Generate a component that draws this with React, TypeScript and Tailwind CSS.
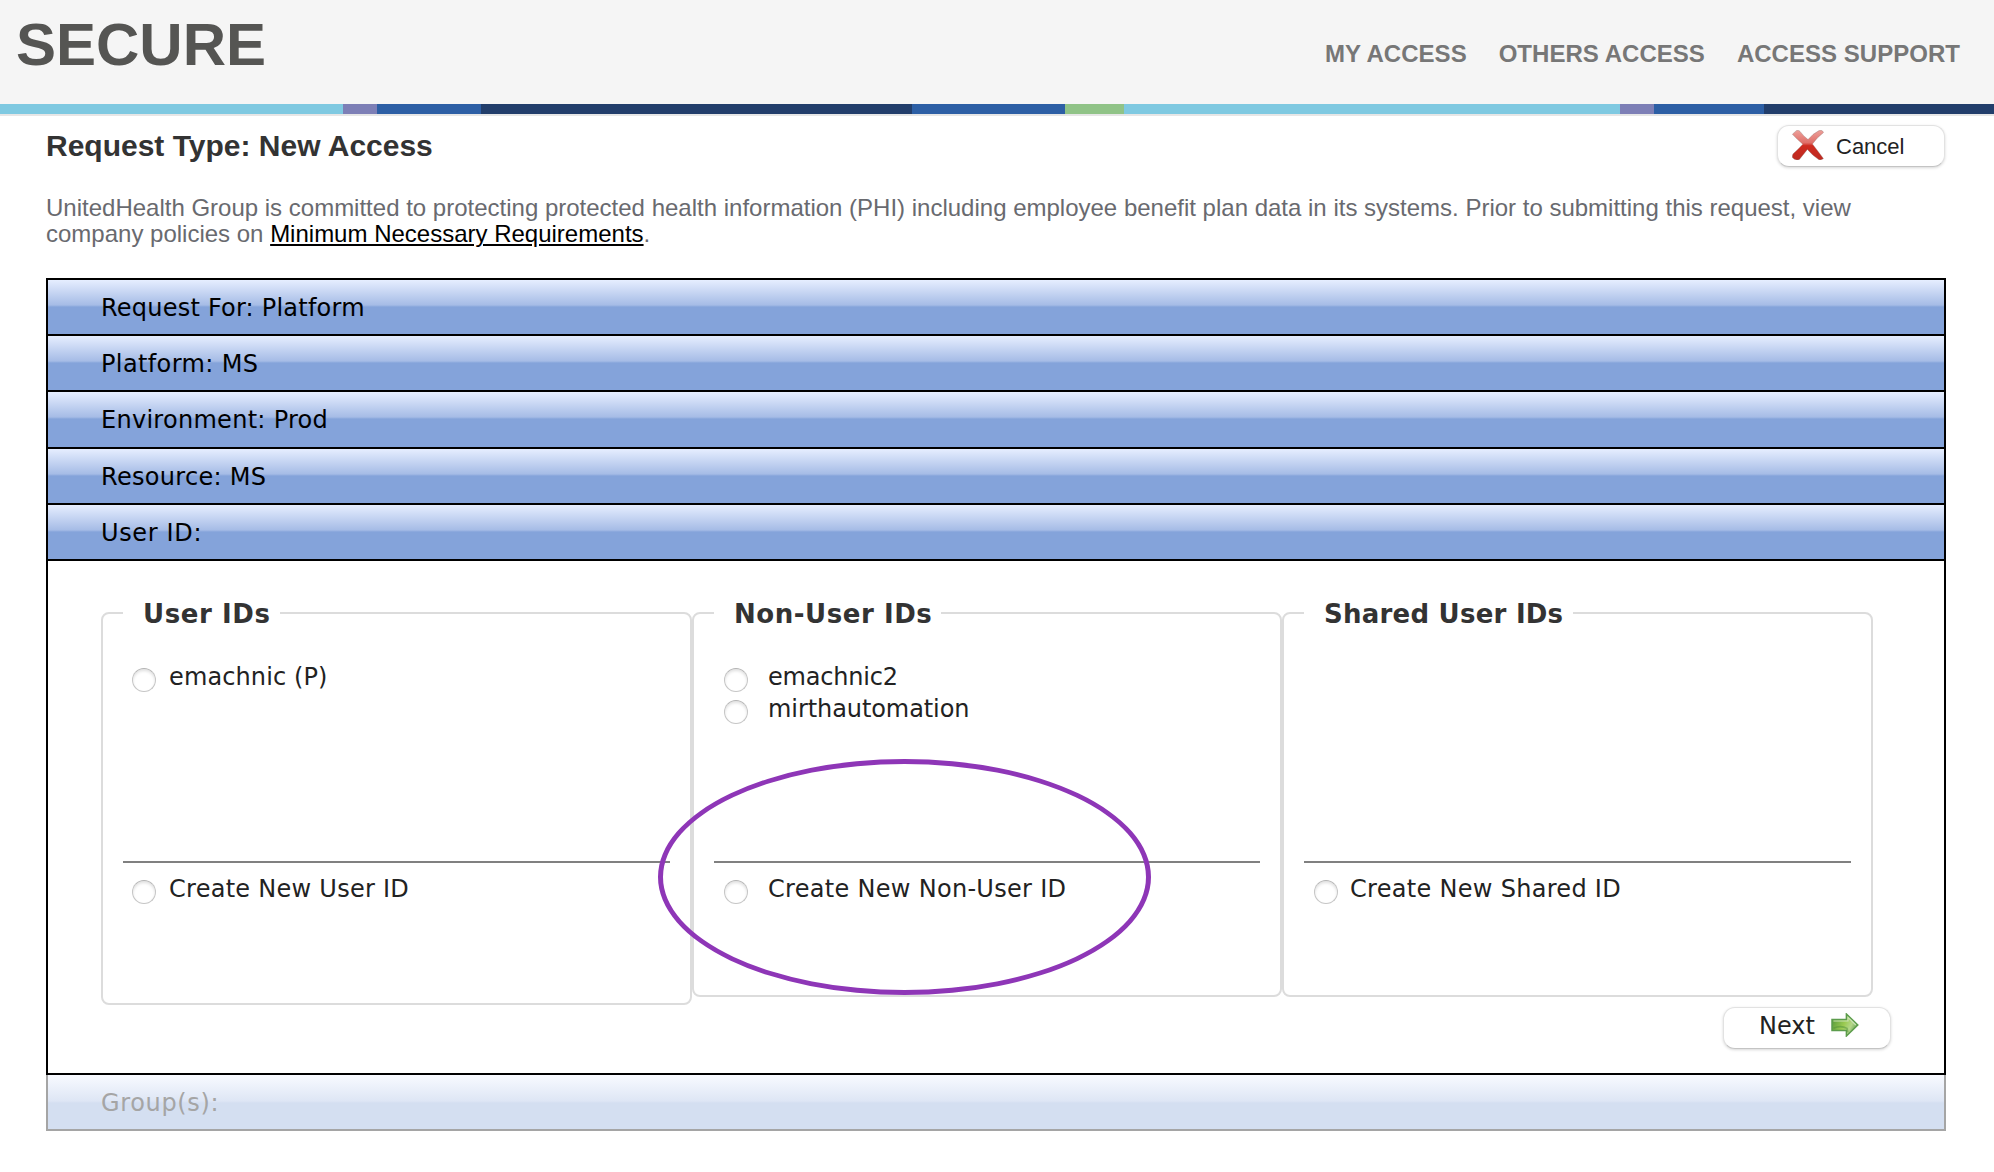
const stripes = [
  { width: 343, className: 'bg-[#7fc9e1]' },
  { width: 34, className: 'bg-[#7d7fb6]' },
  { width: 104, className: 'bg-[#2d5fa5]' },
  { width: 431, className: 'bg-[#223e6b]' },
  { width: 153, className: 'bg-[#2d5fa5]' },
  { width: 59, className: 'bg-[#90c387]' },
  { width: 496, className: 'bg-[#7fc9e1]' },
  { width: 34, className: 'bg-[#7d7fb6]' },
  { width: 110, className: 'bg-[#2d5fa5]' },
  { width: 230, className: 'bg-[#223e6b]' },
];

const sections = [
  { label: 'Request For:', value: 'Platform', className: 'h-[56px] tracking-[0.22px]' },
  { label: 'Platform:', value: 'MS', className: 'h-[56px] tracking-[0.38px]' },
  { label: 'Environment:', value: 'Prod', className: 'h-[57px] tracking-[0.28px]' },
  { label: 'Resource:', value: 'MS', className: 'h-[56px] tracking-[0.3px]' },
  { label: 'User ID:', value: '', className: 'h-[56px] tracking-[0.65px]' },
];

type Option = { label: string; tracking: string };
type Group = {
  title: string;
  legend: string;
  box: string;
  indent: string;
  gap: string;
  options: Option[];
  create: Option;
};

const groups: Group[] = [
  {
    title: 'User IDs',
    legend: 'pl-[20px] pr-[9px] tracking-[0.6px]',
    box: 'w-[591px] h-[408px]',
    indent: 'pl-[9px]',
    gap: 'gap-[13px]',
    options: [{ label: 'emachnic (P)', tracking: 'tracking-[0.12px]' }],
    create: { label: 'Create New User ID', tracking: 'tracking-[0.27px]' },
  },
  {
    title: 'Non-User IDs',
    legend: 'pl-[20px] pr-[9px] tracking-[0.55px]',
    box: 'w-[590px] h-[400px]',
    indent: 'pl-[10px]',
    gap: 'gap-[20px]',
    options: [
      { label: 'emachnic2', tracking: 'tracking-[-0.2px]' },
      { label: 'mirthautomation', tracking: 'tracking-[-0.08px]' },
    ],
    create: { label: 'Create New Non-User ID', tracking: 'tracking-[0.3px]' },
  },
  {
    title: 'Shared User IDs',
    legend: 'pl-[20px] pr-[10px] tracking-[0.24px]',
    box: 'w-[591px] h-[400px]',
    indent: 'pl-[10px]',
    gap: 'gap-[12px]',
    options: [],
    create: { label: 'Create New Shared ID', tracking: 'tracking-[0.3px]' },
  },
];

function RadioRow({ option, indent, gap }: { option: Option; indent: string; gap: string }) {
  return (
    <label className={`flex h-8 items-start ${indent} ${gap}`}>
      <span className="mt-1 size-6 shrink-0 rounded-full border border-[#c6c6c6] border-t-[#b4b4b4] bg-white shadow-[inset_0_2px_3px_rgba(0,0,0,0.12)]" />
      <span className={`text-[24px] leading-[26px] whitespace-nowrap text-[#222] ${option.tracking}`}>{option.label}</span>
    </label>
  );
}

function IdGroup({ group }: { group: Group }) {
  return (
    <fieldset className={`shrink-0 rounded-lg border-2 border-[#dcdcdc] px-5 ${group.box}`}>
      <legend className={`h-8 pt-px text-[26px] leading-8 font-bold whitespace-nowrap text-[#333] ${group.legend}`}>
        {group.title}
      </legend>
      <div className="h-[232px] pt-[35px]">
        {group.options.map((option) => (
          <RadioRow key={option.label} option={option} indent={group.indent} gap={group.gap} />
        ))}
      </div>
      <div className="mb-[13px] h-[2px] bg-[#808080]" />
      <RadioRow option={group.create} indent={group.indent} gap={group.gap} />
    </fieldset>
  );
}

function CrossIcon() {
  return (
    <svg className="h-[30px] w-8 shrink-0" viewBox="0 0 32 30">
      <defs>
        <linearGradient id="cross" x1="0" y1="0" x2="0" y2="1">
          <stop offset="0" stopColor="#eda09a" />
          <stop offset="0.42" stopColor="#e0706a" />
          <stop offset="0.52" stopColor="#cf2b20" />
          <stop offset="1" stopColor="#bd2a20" />
        </linearGradient>
      </defs>
      <path
        d="M0.4 4.2 L4.6 0.4 Q6.8 -0.2 8 1.4 Q11.4 6 16 9.6 Q20.5 3.8 27 0.6 Q30.6 -0.4 31.6 2.4 Q25 7.4 20.4 14 Q25.4 20.4 31.4 28.6 Q29.4 30.4 27 29.8 Q20.8 25.8 15.4 19.4 Q11.4 24.4 7.4 29.4 Q3 31 0.4 27.6 Q0 25 1.4 23.6 Q6.2 19.2 10.8 14.2 Q5.4 9.6 0.4 4.2 Z"
        fill="url(#cross)"
        stroke="#8d6f6c"
        strokeOpacity="0.4"
        strokeWidth="0.9"
      />
    </svg>
  );
}

function ArrowIcon() {
  return (
    <svg className="h-6 w-7 shrink-0" viewBox="0 0 28 24">
      <defs>
        <linearGradient id="arrow" x1="0" y1="0.2" x2="1" y2="0.6">
          <stop offset="0" stopColor="#55993a" />
          <stop offset="0.5" stopColor="#9ccb52" />
          <stop offset="0.75" stopColor="#b4d68a" />
          <stop offset="1" stopColor="#5fa04e" />
        </linearGradient>
      </defs>
      <path d="M1 6.4 H15.4 V1 L26.8 12 L15.4 23 V17.6 H1 Z" fill="url(#arrow)" stroke="#5c9c4c" strokeWidth="1.5" />
      <path d="M2.4 8 H17 V4.4 L24.8 12" fill="none" stroke="#c9e2b4" strokeWidth="1.2" />
      <path d="M2.4 15.2 Q10 12 16 15.4 L17 19.4" fill="none" stroke="#4f8f3a" strokeOpacity="0.5" strokeWidth="1.6" />
    </svg>
  );
}

const buttonClass =
  'flex shrink-0 rounded-[12px] border border-[#e2e2e2] border-b-[#c4c4c4] bg-white shadow-[0_1px_3px_rgba(0,0,0,0.16)]';

export default function App() {
  return (
    <div className="h-[1172px] w-[1994px] overflow-hidden bg-white font-['Liberation_Sans',Arial,sans-serif]">
      <header className="flex h-[104px] justify-between bg-[#f5f5f5] pr-[34px] pl-[16px]">
        <h1 className="mt-[15px] text-[60px] leading-[60px] font-bold text-[#555553]">SECURE</h1>
        <nav className="mt-[42px] flex gap-8 text-[24px] leading-6 font-bold tracking-[0.03px] text-[#777]">
          <a>MY ACCESS</a>
          <a>OTHERS ACCESS</a>
          <a>ACCESS SUPPORT</a>
        </nav>
      </header>
      <div className="flex h-3 border-b-2 border-[#e6e6e6]">
        {stripes.map((stripe, i) => (
          <div key={i} className={`shrink-0 ${stripe.className}`} style={{ width: stripe.width }} />
        ))}
      </div>

      <main className="w-[1946px] pl-[46px]">
        <div className="flex h-[79px] justify-between">
          <h2 className="mt-[12px] text-[30px] leading-9 font-bold text-[#333]">Request Type: New Access</h2>
          <button className={`${buttonClass} mt-[9px] mr-px h-[42px] w-[168px] pt-1 pl-[14px]`}>
            <CrossIcon />
            <span className="ml-3 text-[22px] leading-[34px] text-[#222]">Cancel</span>
          </button>
        </div>
        <p className="h-[83px] text-[24px] leading-[26px] text-[#696a6f]">
          UnitedHealth Group is committed to protecting protected health information (PHI) including employee benefit plan data in its
          systems. Prior to submitting this request, view
          <br />
          company policies on <a className="text-black underline decoration-[2px] underline-offset-[2px]">Minimum Necessary Requirements</a>.
        </p>

        <div className="font-['DejaVu_Sans',Verdana,sans-serif]">
          <div className="border-2 border-black">
            {sections.map((section) => (
              <div
                key={section.label}
                className={`${section.className} border-b-2 border-black bg-[linear-gradient(to_bottom,#e6eeff_0px,#a6bce6_25px,#84a3da_27px,#84a3da_100%)] pt-[2px] pl-[53px] text-[24px] leading-[52px] text-black`}
              >
                {section.label} {section.value}
              </div>
            ))}
            <div className="relative h-[512px] pt-9 pl-[53px]">
              <div className="flex h-[410px] items-start">
                {groups.map((group) => (
                  <IdGroup key={group.title} group={group} />
                ))}
              </div>
              <div className="flex justify-end pr-[53px]">
                <button className={`${buttonClass} h-[42px] w-[168px] pt-[5px] pl-[35px]`}>
                  <span className="text-[24px] leading-[26px] text-[#222]">Next</span>
                  <span className="ml-4">
                    <ArrowIcon />
                  </span>
                </button>
              </div>
              <div className="absolute top-[198px] left-[610px] h-[236px] w-[493px] rounded-[50%] border-[5px] border-[#8e36b7]" />
            </div>
          </div>
          <div className="h-14 border-2 border-t-0 border-[#a5a5a5] bg-[linear-gradient(to_bottom,#f8faff_0px,#dee6f5_26px,#d4dff1_28px,#d4dff1_100%)] pt-px pl-[53px] text-[24px] leading-[54px] tracking-[0.65px] text-[#a5a5a5]">
            Group(s):
          </div>
        </div>
      </main>
    </div>
  );
}
